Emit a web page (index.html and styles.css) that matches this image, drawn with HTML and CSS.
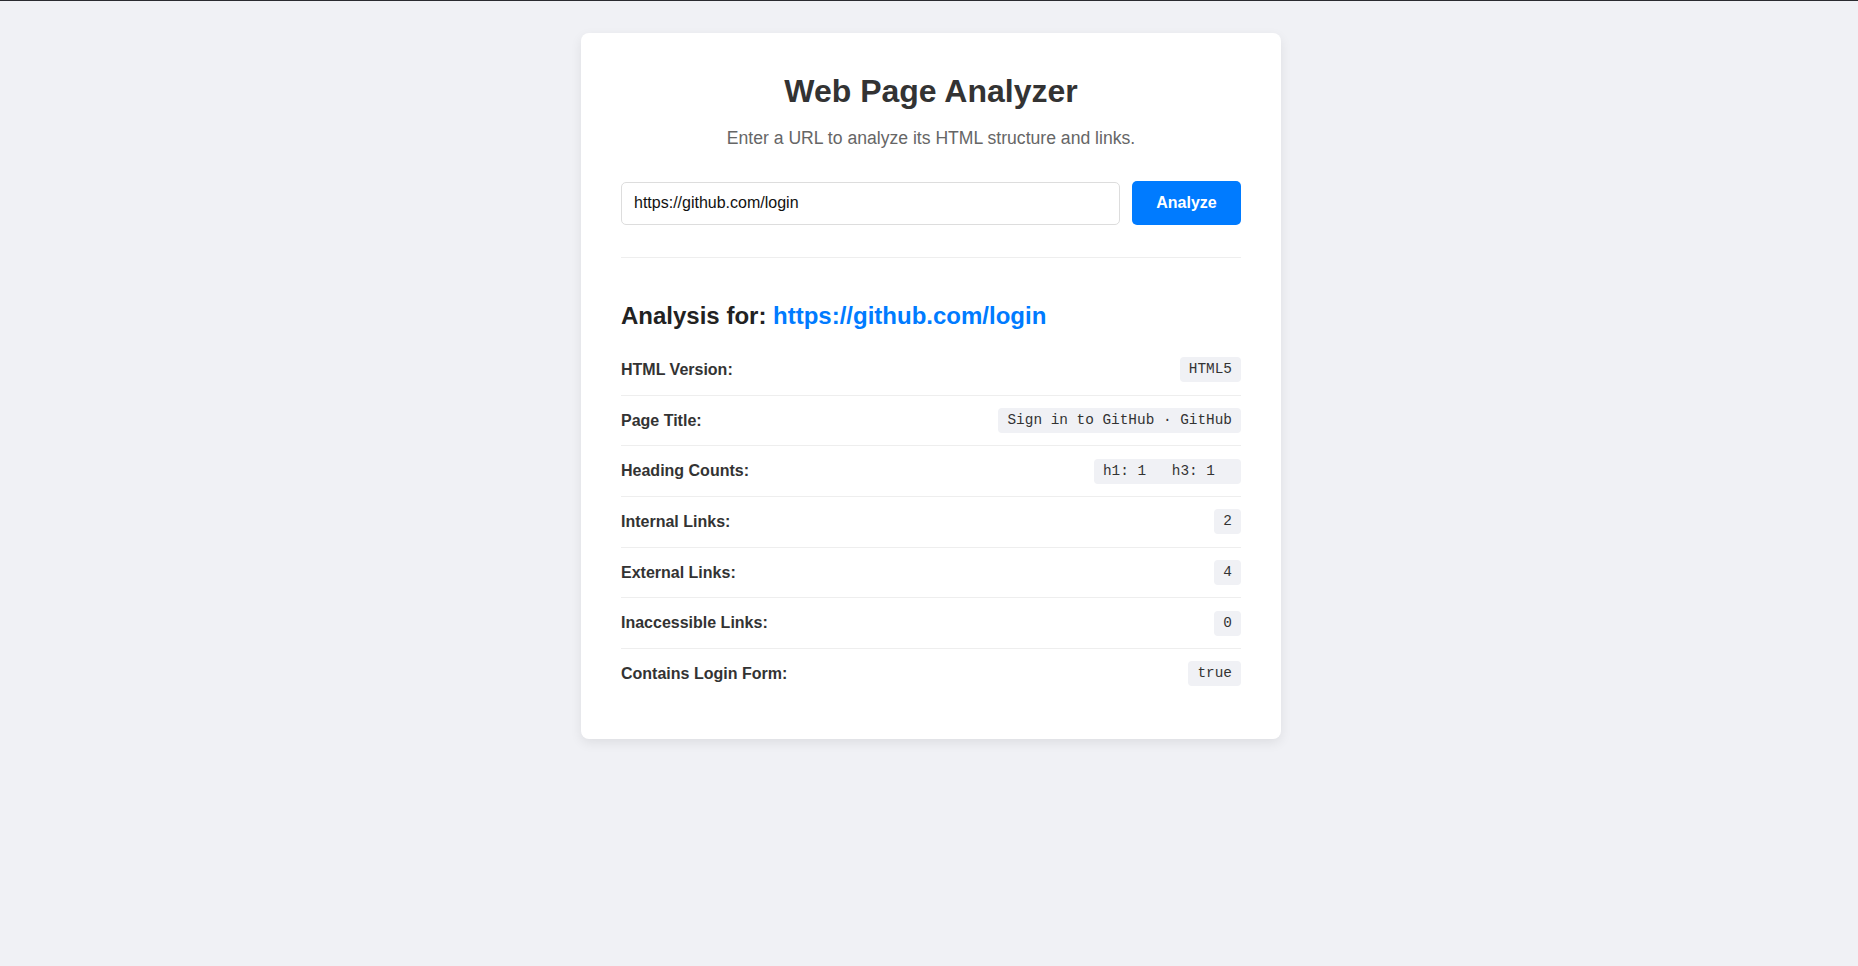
FILE: index.html
```html
<!DOCTYPE html>
<html lang="en">
<head>
<meta charset="utf-8">
<title>Web Page Analyzer</title>
<link rel="stylesheet" href="styles.css">
</head>
<body>
<main class="card">
  <h1 class="title">Web Page Analyzer</h1>
  <p class="subtitle">Enter a URL to analyze its HTML structure and links.</p>
  <form class="url-form">
    <input class="url-input" type="text" value="https://github.com/login">
    <button class="analyze-btn" type="button">Analyze</button>
  </form>
  <hr class="divider">
  <section class="results">
    <h2 class="results-title">Analysis for: <a class="results-link" href="#">https://github.com/login</a></h2>
    <div class="row"><span class="label">HTML Version:</span><code class="value">HTML5</code></div>
    <div class="row"><span class="label">Page Title:</span><code class="value">Sign in to GitHub · GitHub</code></div>
    <div class="row"><span class="label">Heading Counts:</span><code class="value"><span class="hcount">h1: 1</span> <span class="hcount">h3: 1</span></code></div>
    <div class="row"><span class="label">Internal Links:</span><code class="value">2</code></div>
    <div class="row"><span class="label">External Links:</span><code class="value">4</code></div>
    <div class="row"><span class="label">Inaccessible Links:</span><code class="value">0</code></div>
    <div class="row"><span class="label">Contains Login Form:</span><code class="value">true</code></div>
  </section>
</main>
</body>
</html>
```
FILE: styles.css
```css
* { box-sizing: border-box; }
html, body { margin: 0; padding: 0; }
body {
  background: #f0f1f5;
  border-top: 1px solid #2a2b30;
  font-family: "Liberation Sans", Arial, sans-serif;
  font-size: 16px;
  color: #333;
  min-height: 100vh;
  padding: 32px 0 0 4px;
}
.card {
  width: 700px;
  margin: 0 auto;
  background: #fff;
  border-radius: 8px;
  box-shadow: 0 4px 12px rgba(0, 0, 0, 0.08);
  padding: 40px;
}
.title {
  margin: 0;
  font-size: 32px;
  font-weight: bold;
  text-align: center;
  color: #333;
  line-height: 37px;
}
.subtitle {
  margin: 18px 0 0;
  text-align: center;
  font-size: 17.6px;
  color: #666;
  line-height: 20px;
}
.url-form {
  display: flex;
  align-items: center;
  gap: 12px;
  margin-top: 33px;
}
.url-input {
  flex: 1;
  height: 43px;
  border: 1px solid #ddd;
  border-radius: 5px;
  padding: 0 12px;
  font-family: "Liberation Sans", Arial, sans-serif;
  font-size: 16px;
  color: #111;
  outline: none;
}
.analyze-btn {
  height: 44px;
  width: 109px;
  border: none;
  border-radius: 5px;
  background: #007bff;
  color: #fff;
  font-family: "Liberation Sans", Arial, sans-serif;
  font-weight: bold;
  font-size: 16px;
}
.divider {
  border: none;
  border-top: 1px solid #eee;
  margin: 32px 0 0;
}
.results { padding-top: 44px; }
.results-title {
  margin: 0 0 15px;
  font-size: 24px;
  line-height: 28px;
  color: #222;
}
.results-link {
  color: #007bff;
  text-decoration: none;
}
.row {
  display: flex;
  justify-content: space-between;
  align-items: center;
  padding: 12.45px 0;
  border-bottom: 1px solid #eee;
}
.row:last-child { border-bottom: none; }
.label {
  font-weight: bold;
  color: #333;
}
.value {
  font-family: "Liberation Mono", "DejaVu Sans Mono", monospace;
  font-size: 14.4px;
  line-height: 16.8px;
  background: #f0f1f5;
  color: #333;
  padding: 4px 9px;
  border-radius: 4px;
  white-space: pre;
}
.hcount { margin-right: 17px; }
```
